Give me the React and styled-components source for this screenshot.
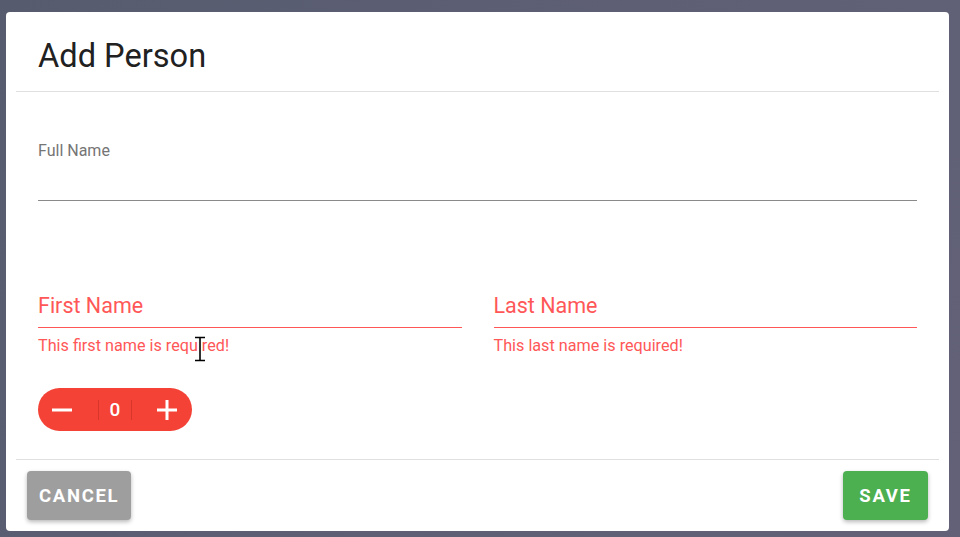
import React from "react";
import styled, { createGlobalStyle } from "styled-components";

const Global = createGlobalStyle`
  html, body { margin: 0; padding: 0; height: 100%; }
  body {
    font-family: Roboto, "Liberation Sans", sans-serif;
    background: linear-gradient(120deg, #565c6e 0%, #5e5f75 50%, #626178 100%);
  }
  * { box-sizing: border-box; }
`;

const Page = styled.div`
  width: 960px;
  height: 537px;
  padding: 12px 11px 6px 6px;
  position: relative;
`;

const Dialog = styled.div`
  width: 943px;
  height: 519px;
  background: #fff;
  border-radius: 4px;
  display: flex;
  flex-direction: column;
`;

const Header = styled.div`
  height: 79px;
  padding: 0 32px;
  display: flex;
  align-items: flex-start;
`;

const Title = styled.h2`
  margin: 26px 0 0;
  font-size: 32.6px;
  line-height: 36px;
  font-weight: 400;
  color: #212121;
`;

const Divider = styled.div`
  height: 1px;
  margin: 0 10px;
  background: #e0e0e0;
`;

const Content = styled.div`
  flex: 1;
  padding: 0 32px;
  display: flex;
  flex-direction: column;
`;

const Field = styled.div`
  display: flex;
  flex-direction: column;
  flex: ${(p) => (p.$fixed ? "none" : 1)};
  margin-top: ${(p) => p.$mt || 0}px;
`;

const SmallLabel = styled.label`
  font-size: 16px;
  line-height: 18px;
  color: #757575;
`;

const Input = styled.div`
  height: ${(p) => p.$h}px;
  border-bottom: 1px solid ${(p) => (p.$error ? "#ff5757" : "#8a8a8a")};
`;

const Row = styled.div`
  display: flex;
  gap: 32px;
  margin-top: 93px;
`;

const BigLabel = styled.label`
  font-size: 21.5px;
  line-height: 24px;
  color: #ff5757;
`;

const ErrorText = styled.div`
  margin-top: 9px;
  font-size: 16.2px;
  line-height: 18px;
  color: #ff5757;
`;

const Counter = styled.div`
  margin-top: 33px;
  width: 154px;
  height: 43px;
  border-radius: 22px;
  background: #f44336;
  display: flex;
  align-items: center;
`;

const CounterButton = styled.button`
  width: 60px;
  height: 43px;
  border: none;
  background: transparent;
  padding: 0;
  display: flex;
  align-items: center;
  justify-content: ${(p) => (p.$side === "left" ? "flex-start" : "flex-end")};
  padding-left: ${(p) => (p.$side === "left" ? "14px" : "0")};
  padding-right: ${(p) => (p.$side === "right" ? "15px" : "0")};
  cursor: pointer;
`;

const Sep = styled.div`
  width: 1px;
  height: 20px;
  background: #d8352b;
`;

const Value = styled.div`
  width: 32px;
  text-align: center;
  color: #fff;
  font-size: 19px;
  font-weight: 500;
  line-height: 43px;
`;

const Footer = styled.div`
  height: 71px;
  padding: 11px 21px;
  display: flex;
  justify-content: space-between;
  align-items: flex-start;
`;

const ActionButton = styled.button`
  height: 49px;
  min-width: 85px;
  padding: 0 12px;
  border: none;
  border-radius: 4px;
  background: ${(p) => p.$bg};
  color: #fff;
  font-family: Roboto, "Liberation Sans", sans-serif;
  font-size: 18.5px;
  font-weight: 700;
  letter-spacing: 1.7px;
  box-shadow: 0 2px 4px rgba(0, 0, 0, 0.28);
  cursor: pointer;
`;

const Cursor = styled.svg`
  position: absolute;
  left: 193px;
  top: 336px;
`;

export default function App() {
  return (
    <>
      <Global />
      <Page>
        <Dialog>
          <Header>
            <Title>Add Person</Title>
          </Header>
          <Divider />
          <Content>
            <Field $mt={50} $fixed>
              <SmallLabel>Full Name</SmallLabel>
              <Input $h={41} />
            </Field>
            <Row>
              <Field>
                <BigLabel>First Name</BigLabel>
                <Input $h={10} $error />
                <ErrorText>This first name is required!</ErrorText>
              </Field>
              <Field>
                <BigLabel>Last Name</BigLabel>
                <Input $h={10} $error />
                <ErrorText>This last name is required!</ErrorText>
              </Field>
            </Row>
            <Counter>
              <CounterButton $side="left" aria-label="decrement">
                <svg width="20" height="20" viewBox="0 0 20 20">
                  <rect x="0" y="8.5" width="20" height="3" fill="#fff" />
                </svg>
              </CounterButton>
              <Sep />
              <Value>0</Value>
              <Sep />
              <CounterButton $side="right" aria-label="increment">
                <svg width="20" height="20" viewBox="0 0 20 20">
                  <rect x="0" y="8.5" width="20" height="3" fill="#fff" />
                  <rect x="8.5" y="0" width="3" height="20" fill="#fff" />
                </svg>
              </CounterButton>
            </Counter>
          </Content>
          <Divider />
          <Footer>
            <ActionButton $bg="#9e9e9e">CANCEL</ActionButton>
            <ActionButton $bg="#4caf50">SAVE</ActionButton>
          </Footer>
        </Dialog>
        <Cursor width="14" height="26" viewBox="0 0 14 26">
          <path d="M1 1h12M1 25h12M7 1v24" stroke="#fff" strokeWidth="3" fill="none" />
          <path d="M2 1.5h10M2 24.5h10M7 1.5v23" stroke="#000" strokeWidth="1.6" fill="none" />
        </Cursor>
      </Page>
    </>
  );
}
